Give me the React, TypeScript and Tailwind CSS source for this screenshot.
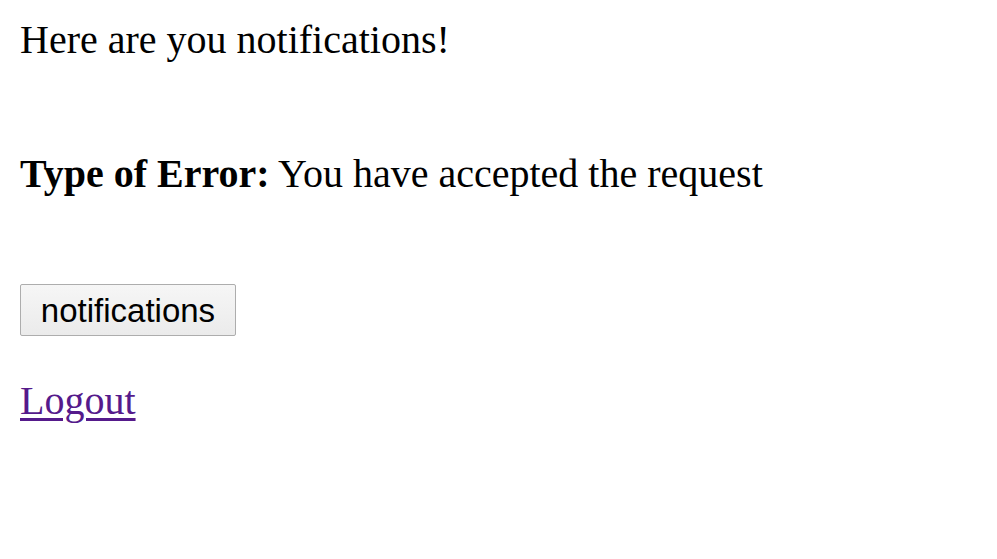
export default function App() {
  return (
    <div className="min-h-screen bg-white px-[20px] pt-[18px] font-['Liberation_Serif','Times_New_Roman',serif] text-[40px] leading-[44px] text-black">
      <div>Here are you notifications!</div>

      <div className="mt-[90px]">
        <b className="font-bold">Type of Error:</b> You have accepted the request
      </div>

      <div className="mt-[88px]">
        <button
          type="button"
          className="h-[52px] w-[216px] rounded-[2px] border border-[#adadad] bg-gradient-to-b from-[#f6f6f6] to-[#ebebeb] font-['Liberation_Sans',Arial,sans-serif] text-[33px] leading-none text-black"
        >
          notifications
        </button>
      </div>

      <div className="mt-[43px]">
        <a href="#" className="text-[#551a8b] underline decoration-[3px] underline-offset-[4px]">
          Logout
        </a>
      </div>
    </div>
  );
}
